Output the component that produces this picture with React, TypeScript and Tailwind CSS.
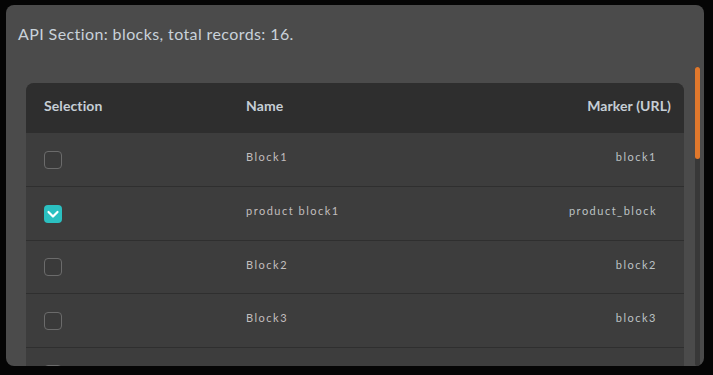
import { useState } from "react";

type Block = { name: string; marker: string };

const blocks: Block[] = [
  { name: "Block1", marker: "block1" },
  { name: "product block1", marker: "product_block" },
  { name: "Block2", marker: "block2" },
  { name: "Block3", marker: "block3" },
  { name: "Block4", marker: "block4" },
  { name: "Block5", marker: "block5" },
];

function Checkbox({ checked, onChange }: { checked: boolean; onChange: () => void }) {
  if (checked) {
    return (
      <button
        onClick={onChange}
        className="w-[18px] h-[18px] rounded-[4px] bg-[#2bc0c1] flex items-center justify-center"
        aria-label="Deselect"
      >
        <svg width="18" height="18" viewBox="0 0 18 18" fill="none">
          <path d="M4.5 7 L9 11.5 L13.5 7" stroke="#ffffff" strokeWidth="2.2" strokeLinecap="round" strokeLinejoin="round" />
        </svg>
      </button>
    );
  }
  return (
    <button
      onClick={onChange}
      className="w-[18px] h-[18px] rounded-[4px] border border-[#6b6b6b] bg-[#3a3a3a]"
      aria-label="Select"
    />
  );
}

export default function App() {
  const [selected, setSelected] = useState<string[]>(["product block1"]);

  const toggle = (name: string) => {
    setSelected((s) => (s.includes(name) ? s.filter((n) => n !== name) : [...s, name]));
  };

  return (
    <div className="w-[713px] h-[375px] bg-[#050505] pt-[5px] pl-[6px] font-['Lato','Liberation_Sans',sans-serif]">
      <div className="w-[698px] h-[361px] bg-[#4b4b4b] rounded-[8px] flex flex-col overflow-hidden">
        {/* Title */}
        <div className="h-[62px] px-[12px] pt-[18px] text-[16px] tracking-[0.4px] leading-[22px] text-[#c9d2da]">
          API Section: blocks, total records: 16.
        </div>

        {/* Scroll area */}
        <div className="flex-1 flex min-h-0">
          <div className="flex-1 pl-[20px] pr-[11px] pt-[16px] overflow-hidden">
            <div className="rounded-t-[8px] overflow-hidden bg-[#3d3d3d]">
              <div className="h-[50px] pb-[5px] bg-[#2e2e2e] flex items-center text-[14px] font-bold tracking-[0.1px] text-[#c6ced6]">
                <div className="w-[202px] pl-[18px]">Selection</div>
                <div className="flex-1 pl-[18px]">Name</div>
                <div className="pr-[13px]">Marker (URL)</div>
              </div>
              {blocks.map((b, i) => (
                <div
                  key={b.name}
                  className={`flex items-center text-[11px] tracking-[1.5px] text-[#c2bebe] border-[#2f2f2f] ${
                    i === 0 ? "h-[53px]" : i % 2 === 1 ? "h-[54px] border-t" : "h-[53px] border-t"
                  }`}
                >
                  <div className="w-[202px] pl-[18px] flex items-center">
                    <Checkbox checked={selected.includes(b.name)} onChange={() => toggle(b.name)} />
                  </div>
                  <div className="flex-1 pl-[18px] pb-[4px]">{b.name}</div>
                  <div className="pr-[27px] pb-[4px] text-[#bcc2c4]">{b.marker}</div>
                </div>
              ))}
            </div>
          </div>

          {/* Scrollbar */}
          <div className="w-[5px] mr-[4px] bg-[#383838] rounded-full">
            <div className="h-[92px] bg-[#e0782c] rounded-full" />
          </div>
        </div>
      </div>
    </div>
  );
}
